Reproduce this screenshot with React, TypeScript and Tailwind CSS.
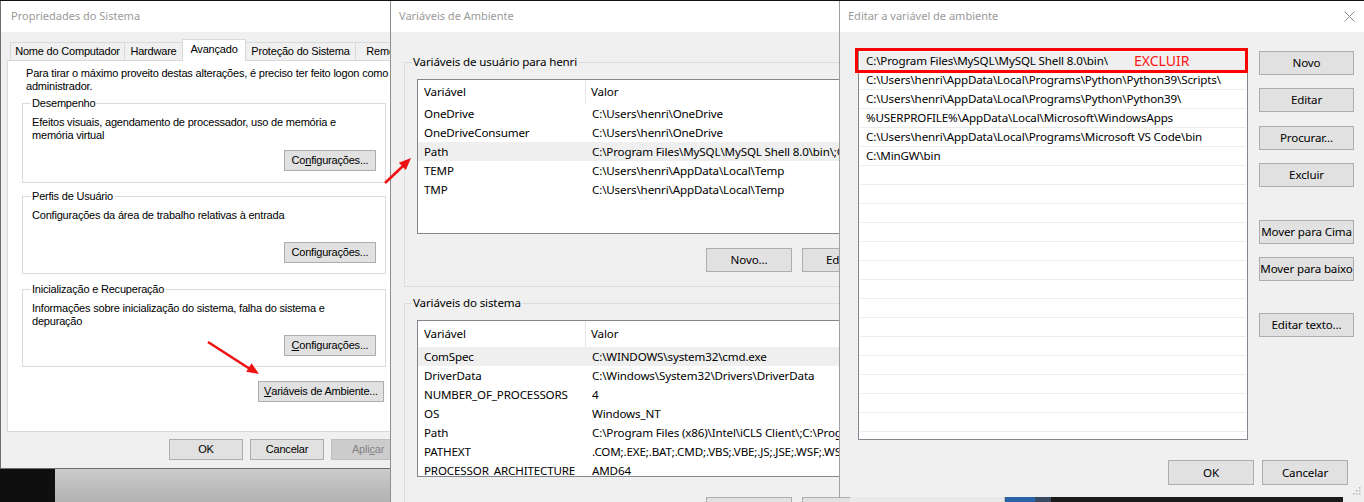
import React from 'react'

type Kids = { children?: React.ReactNode; className?: string }

function Btn({ children, className = '', disabled = false }: Kids & { disabled?: boolean }) {
  return (
    <button
      className={`flex shrink-0 items-center justify-center whitespace-nowrap border ${
        disabled ? 'border-[#bfbfbf] bg-[#cccccc] text-[#838383]' : 'border-[#adadad] bg-[#e1e1e1] text-black'
      } ${className}`}
    >
      {children}
    </button>
  )
}

function Group({ label, className = '', labelClass = '', children }: Kids & { label: string; labelClass?: string }) {
  return (
    <div className={`relative shrink-0 border ${className}`}>
      <span className={`absolute whitespace-nowrap px-[1px] ${labelClass}`}>{label}</span>
      {children}
    </div>
  )
}

const u = (s: string) => <span className="underline">{s}</span>

function SystemProps() {
  const tabs = [
    { label: 'Nome do Computador', w: 'w-[115px]' },
    { label: 'Hardware', w: 'w-[59px]' },
    { label: 'Avançado', w: 'w-[64px]', on: true },
    { label: 'Proteção do Sistema', w: 'w-[111px]' },
    { label: 'Remoto', w: 'w-[60px]' },
  ]
  return (
    <div className="absolute isolate left-0 top-[1px] flex h-[468px] w-[411px] flex-col border-b border-l border-[#6f6f6f] bg-[#f0f0f0] font-['Liberation_Sans',Arial,sans-serif] text-[11px] tracking-[-0.2px] text-black">
      <div className="flex h-[31px] shrink-0 items-center bg-white pl-[10px] font-['Noto_Sans',sans-serif] text-[11px] tracking-normal text-[#9a9a9a]">
        Propriedades do Sistema
      </div>

      {/* tabs */}
      <div className="relative z-10 mt-[7px] flex h-[21px] shrink-0 items-end pl-[9px]">
        {tabs.map(t => (
          <div
            key={t.label}
            className={`flex shrink-0 items-center justify-center overflow-hidden whitespace-nowrap border-l border-r border-t border-[#d9d9d9] -mr-[1px] ${t.w} ${
              t.on ? 'h-[22px] -mb-[1px] bg-white pb-[3px]' : 'h-[18px] bg-[#f0f0f0]'
            }`}
          >
            {t.label}
          </div>
        ))}
      </div>

      {/* panel */}
      <div className="mx-[6px] flex h-[372px] shrink-0 flex-col border border-[#d9d9d9] bg-white pl-[14px] pt-[6px] leading-[13px]">
        <p className="pl-[4px]">
          Para tirar o máximo proveito destas alterações, é preciso ter feito logon como
          <br />
          administrador.
        </p>

        <Group label="Desempenho" className="mt-[10px] flex h-[80px] w-[364px] flex-col border-[#dcdcdc] px-[9px] pb-[11px] pt-[12px]" labelClass="-top-[7px] left-[8px] bg-white">
          <p>
            Efeitos visuais, agendamento de processador, uso de memória e
            <br />
            memória virtual
          </p>
          <Btn className="mt-auto h-[21px] w-[92px] self-end">Co{u('n')}figurações...</Btn>
        </Group>

        <Group label="Perfis de Usuário" className="mt-[13px] flex h-[78px] w-[364px] flex-col border-[#dcdcdc] px-[9px] pb-[10px] pt-[12px]" labelClass="-top-[7px] left-[8px] bg-white">
          <p>Configurações da área de trabalho relativas à entrada</p>
          <Btn className="mt-auto h-[21px] w-[92px] self-end">Confi{u('g')}urações...</Btn>
        </Group>

        <Group label="Inicialização e Recuperação" className="mt-[15px] flex h-[78px] w-[364px] flex-col border-[#dcdcdc] px-[9px] pb-[10px] pt-[12px]" labelClass="-top-[7px] left-[8px] bg-white">
          <p>
            Informações sobre inicialização do sistema, falha do sistema e
            <br />
            depuração
          </p>
          <Btn className="mt-auto h-[21px] w-[92px] self-end">{u('C')}onfigurações...</Btn>
        </Group>

        <Btn className="ml-[236px] mt-[14px] h-[21px] w-[126px]">{u('V')}ariáveis de Ambiente...</Btn>
      </div>

      <div className="mt-[7px] flex justify-end gap-[7px] pr-[6px]">
        <Btn className="h-[21px] w-[74px]">OK</Btn>
        <Btn className="h-[21px] w-[74px]">Cancelar</Btn>
        <Btn disabled className="h-[21px] w-[74px]">Apli{u('c')}ar</Btn>
      </div>
    </div>
  )
}

type Row = [string, string]

function VarList({ rows, selected, headH, className = '' }: { rows: Row[]; selected: number; headH: string; className?: string }) {
  return (
    <div className={`shrink-0 overflow-hidden border border-[#828790] bg-white ${className}`}>
      <div className={`flex items-center ${headH}`}>
        <div className="flex h-full w-[168px] shrink-0 items-center border-r border-[#e5e5e5] pl-[6px]">Variável</div>
        <div className="pl-[5px]">Valor</div>
      </div>
      {rows.map((r, i) => (
        <div key={r[0]} className={`flex h-[19px] items-center whitespace-nowrap ${i === selected ? 'bg-[#efefef]' : ''}`}>
          <div className="w-[168px] shrink-0 pl-[6px]">{r[0]}</div>
          <div className="shrink-0 pl-[6px]">{r[1]}</div>
        </div>
      ))}
    </div>
  )
}

function EnvVars() {
  const user: Row[] = [
    ['OneDrive', 'C:\\Users\\henri\\OneDrive'],
    ['OneDriveConsumer', 'C:\\Users\\henri\\OneDrive'],
    ['Path', 'C:\\Program Files\\MySQL\\MySQL Shell 8.0\\bin\\;C:\\Users\\henri\\AppData'],
    ['TEMP', 'C:\\Users\\henri\\AppData\\Local\\Temp'],
    ['TMP', 'C:\\Users\\henri\\AppData\\Local\\Temp'],
  ]
  const sys: Row[] = [
    ['ComSpec', 'C:\\WINDOWS\\system32\\cmd.exe'],
    ['DriverData', 'C:\\Windows\\System32\\Drivers\\DriverData'],
    ['NUMBER_OF_PROCESSORS', '4'],
    ['OS', 'Windows_NT'],
    ['Path', 'C:\\Program Files (x86)\\Intel\\iCLS Client\\;C:\\Program Files\\Intel'],
    ['PATHEXT', '.COM;.EXE;.BAT;.CMD;.VBS;.VBE;.JS;.JSE;.WSF;.WSH;.MSC'],
    ['PROCESSOR_ARCHITECTURE', 'AMD64'],
  ]
  return (
    <div className="absolute isolate left-[390px] top-[1px] flex h-[501px] w-[460px] flex-col overflow-hidden border-l border-[#8e8e8e] bg-[#f0f0f0] font-['Noto_Sans',sans-serif] text-[11.6px] tracking-[-0.15px] text-black">
      <div className="flex h-[31px] shrink-0 items-center bg-white pl-[8px] text-[11px] tracking-normal text-[#9a9a9a]">Variáveis de Ambiente</div>

      <Group label="Variáveis de usuário para henri" className="ml-[13px] mt-[30px] flex h-[225px] w-[520px] flex-col border-[#dcdcdc] pb-[14px] pl-[12px] pt-[16px]" labelClass="-top-[9px] left-[7px] bg-[#f0f0f0] leading-[16px]">
        <VarList rows={user} selected={2} headH="h-[24px]" className="h-[155px] w-[500px]" />
        <div className="mt-[14px] flex gap-[10px] pl-[289px]">
          <Btn className="h-[24px] w-[86px]">Novo...</Btn>
          <Btn className="h-[24px] w-[86px]">Editar...</Btn>
        </div>
      </Group>

      <Group label="Variáveis do sistema" className="ml-[13px] mt-[16px] flex h-[230px] w-[520px] flex-col border-[#dcdcdc] pl-[12px] pt-[16px]" labelClass="-top-[9px] left-[7px] bg-[#f0f0f0] leading-[16px]">
        <VarList rows={sys} selected={0} headH="h-[26px]" className="h-[157px] w-[500px]" />
        <div className="mt-[20px] flex gap-[10px] pl-[289px]">
          <Btn className="h-[24px] w-[86px]">Novo...</Btn>
          <Btn className="h-[24px] w-[86px]">Editar...</Btn>
        </div>
      </Group>
    </div>
  )
}

function EditVar() {
  const paths = [
    'C:\\Program Files\\MySQL\\MySQL Shell 8.0\\bin\\',
    'C:\\Users\\henri\\AppData\\Local\\Programs\\Python\\Python39\\Scripts\\',
    'C:\\Users\\henri\\AppData\\Local\\Programs\\Python\\Python39\\',
    '%USERPROFILE%\\AppData\\Local\\Microsoft\\WindowsApps',
    'C:\\Users\\henri\\AppData\\Local\\Programs\\Microsoft VS Code\\bin',
    'C:\\MinGW\\bin',
  ]
  const rows = Array.from({ length: 20 }, (_, i) => paths[i] ?? '')
  return (
    <div className="absolute isolate left-[839px] top-[1px] flex h-[496px] w-[525px] flex-col border-l border-[#a0a0a0] bg-[#f0f0f0] font-['Noto_Sans',sans-serif] text-[11.6px] tracking-[-0.15px] text-black">
      <div className="flex h-[31px] shrink-0 items-center justify-between bg-white pl-[8px] pr-[8px] text-[11px] tracking-normal text-[#9a9a9a]">
        <span>Editar a variável de ambiente</span>
        <svg width="11" height="11" viewBox="0 0 11 11" className="mr-[1px]">
          <path d="M0.5 0.5 L10.5 10.5 M10.5 0.5 L0.5 10.5" stroke="#8a8a8a" strokeWidth="1" fill="none" />
        </svg>
      </div>

      <div className="mt-[18px] flex items-start pl-[18px]">
        <div className="h-[390px] w-[390px] shrink-0 border border-[#828790] bg-white px-[1px] pt-[1px]">
          {rows.map((p, i) => (
            <div key={i} className={`flex h-[19px] items-center whitespace-nowrap border-b border-[#ececec] pl-[6px] ${i === 0 ? 'bg-[#efefef]' : ''}`}>
              {p}
            </div>
          ))}
        </div>

        <div className="ml-[11px] mt-[1px] flex flex-col">
          <Btn className="h-[24px] w-[95px]">Novo</Btn>
          <Btn className="mt-[13px] h-[24px] w-[95px]">Editar</Btn>
          <Btn className="mt-[14px] h-[24px] w-[95px]">Procurar...</Btn>
          <Btn className="mt-[13px] h-[24px] w-[95px]">Excluir</Btn>
          <Btn className="mt-[33px] h-[24px] w-[95px]">Mover para Cima</Btn>
          <Btn className="mt-[13px] h-[24px] w-[95px]">Mover para baixo</Btn>
          <Btn className="mt-[32px] h-[24px] w-[95px]">Editar texto...</Btn>
        </div>
      </div>

      <div className="mt-[20px] flex justify-end gap-[8px] pr-[16px]">
        <Btn className="h-[25px] w-[86px]">OK</Btn>
        <Btn className="h-[25px] w-[86px]">Cancelar</Btn>
      </div>

      <svg width="9" height="9" viewBox="0 0 9 9" className="absolute bottom-[2px] right-[3px]">
        {[[7, 1], [7, 4], [4, 4], [7, 7], [4, 7], [1, 7]].map(([x, y]) => (
          <rect key={`${x}-${y}`} x={x} y={y} width="1.5" height="1.5" fill="#b5b5b5" />
        ))}
      </svg>
    </div>
  )
}

export default function App() {
  return (
    <div className="relative h-[502px] w-[1364px] overflow-hidden bg-[#0f0f0f]">
      {/* desktop behind the dialogs */}
      <div className="absolute left-[55px] top-[469px] h-[33px] w-[335px] bg-gradient-to-b from-[#cbcbcb] to-[#b2b2b2]" />
      <div className="absolute left-[839px] top-[497px] flex h-[5px] w-[525px]">
        <div className="w-[166px] border-r border-[#bdbdbd] bg-[#e9e9e9]" />
        <div className="w-[30px] bg-[#2a62a8]" />
        <div className="w-[16px] bg-[#3a4a60]" />
        <div className="w-[292px] bg-[#1b1b1b]" />
        <div className="flex-1 bg-[#efefef]" />
      </div>

      <SystemProps />
      <EnvVars />
      <EditVar />

      {/* highlight box */}
      <div className="absolute left-[855px] top-[48px] h-[25px] w-[393px] border-[3px] border-[#ff0000]">
        <span className="absolute left-[276px] top-[0px] font-['Noto_Sans',sans-serif] text-[14px] leading-[19px] text-[#ff1414]">EXCLUIR</span>
      </div>

      {/* arrows */}
      <svg className="pointer-events-none absolute left-0 top-0" width="1364" height="502" viewBox="0 0 1364 502">
        <line x1="208" y1="342" x2="250" y2="369" stroke="#ee1111" strokeWidth="2.6" />
        <polygon points="259,374 246.2,371.7 251.6,363.3" fill="#ee1111" />
        <line x1="385" y1="183" x2="403" y2="166" stroke="#ee1111" strokeWidth="2.6" />
        <polygon points="411,158 405.8,169.9 398.8,162.7" fill="#ee1111" />
      </svg>
    </div>
  )
}
